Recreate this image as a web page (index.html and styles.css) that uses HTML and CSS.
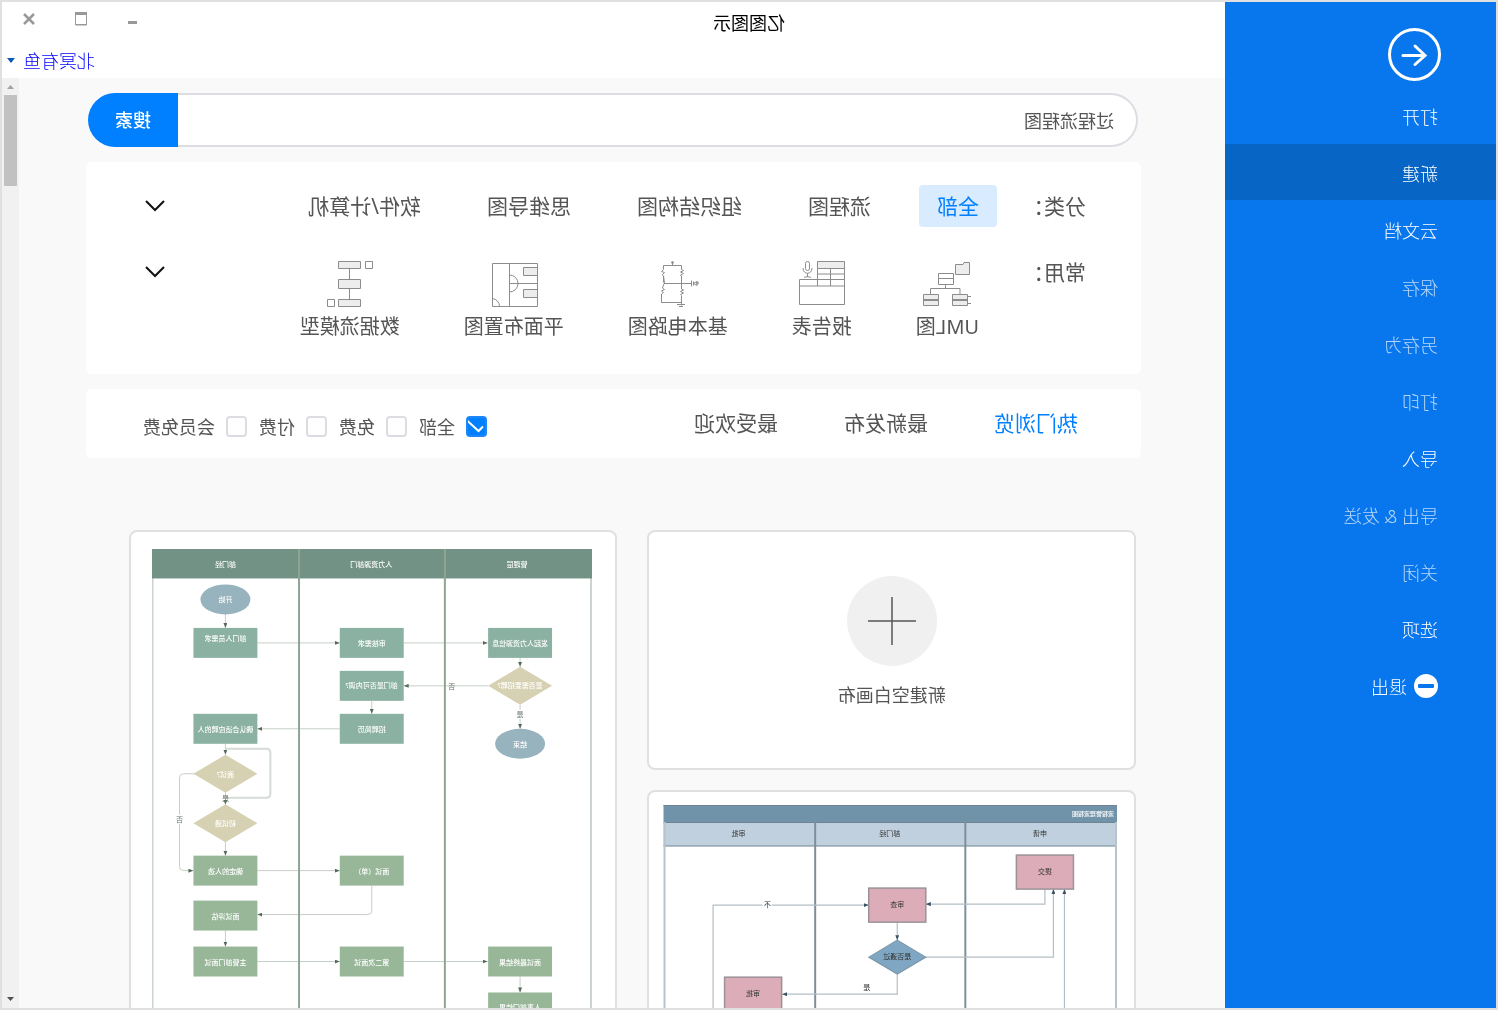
FILE: index.html
```html
<!DOCTYPE html>
<html lang="zh-CN">
<head>
<meta charset="utf-8">
<title>亿图图示</title>
<link rel="stylesheet" href="styles.css">
</head>
<body>
<div class="window">
  <nav class="sidebar">
    <button class="back" aria-label="返回">
      <svg viewBox="0 0 53 53"><circle cx="26.500" cy="26.500" r="25"/><path d="M38 27.500H16M26 18l-10 9.500l10 9"/></svg>
    </button>
    <a class="menu-item" href="#">打开</a>
    <a class="menu-item selected" href="#">新建</a>
    <a class="menu-item" href="#">云文档</a>
    <a class="menu-item disabled" href="#">保存</a>
    <a class="menu-item disabled" href="#">另存为</a>
    <a class="menu-item disabled" href="#">打印</a>
    <a class="menu-item" href="#">导入</a>
    <a class="menu-item disabled" href="#">导出 &amp; 发送</a>
    <a class="menu-item disabled" href="#">关闭</a>
    <a class="menu-item" href="#">选项</a>
    <a class="menu-item" href="#"><svg class="exit-icon" viewBox="0 0 24 24"><circle cx="12" cy="12" r="12" fill="#fff"/><rect x="4" y="10" width="16" height="4" rx="1" fill="#0876ed"/></svg>退出</a>
  </nav>

  <main class="main">
    <header class="header">
      <div class="title-row">
        <h1 class="title">亿图图示</h1>
        <div class="controls">
          <button aria-label="最小化"><svg viewBox="0 0 14 14"><path d="M3 10.500h9" stroke-width="3"/></svg></button>
          <button aria-label="最大化"><svg viewBox="0 0 14 14"><path d="M1.500 1v12h11V1M1 12.500h12" stroke-width="1"/><path d="M1 1.500h12" stroke-width="3"/></svg></button>
          <button aria-label="关闭窗口"><svg viewBox="0 0 14 14"><path d="M2 2l10 10M12 2L2 12" stroke-width="2.500"/></svg></button>
        </div>
      </div>
      <div class="user-row">
        <a class="user" href="#">北冥有鱼</a>
        <svg class="caret" viewBox="0 0 8 5"><path d="M0 0h8L4 5z" fill="#0a5ab4"/></svg>
      </div>
    </header>

    <div class="body">
      <div class="content">
        <form class="search">
          <input class="search-input" type="text" value="过程流程图" aria-label="搜索模板">
          <button class="search-button" type="button">搜索</button>
        </form>

        <section class="panel filters">
          <div class="filter-row">
            <span class="filter-label">分类：</span>
            <div class="categories">
              <button class="category active">全部</button>
              <button class="category">流程图</button>
              <button class="category">组织结构图</button>
              <button class="category">思维导图</button>
              <button class="category">软件/计算机</button>
            </div>
            <button class="expand" aria-label="展开分类"><svg viewBox="0 0 20 12"><path d="M1 1l9 9l9-9"/></svg></button>
          </div>
          <div class="filter-row">
            <span class="filter-label">常用：</span>
            <div class="common">
              <a class="common-item" href="#">
                <svg viewBox="0 0 48 48"><path class="f" d="M1.500 2.500h5.500l1 2h7.500v10h-14zM3.500 34.500h15v11h-15zM32.500 34.500h15v11h-15z"/><path d="M17.500 13.500h15v11h-15zM17.500 18.500h15M25.500 24.500v4M11 34v-5.500h29.500V34M0 36.500h3M0 43.500h3"/><path d="M3.500 40h15M32.500 40h15" stroke-width="2"/></svg>
                UML图</a>
              <a class="common-item" href="#">
                <svg viewBox="0 0 48 48"><path class="f" d="M1.500 1.500h27v7h-27z"/><path d="M1.500 8.500V44.500h45v-25h-45M28.500 8.500v17.500M1.500 14h27M1.500 26h45M15.500 8.500v17.500"/><rect x="36.500" y="1.500" width="4" height="9" rx="2"/><path d="M34 8c0 7 9 7 9 0M38.500 13.500v3.500M35 17.500c1-1 6-1 7 0"/></svg>
                报告表</a>
              <a class="common-item" href="#">
                <svg viewBox="0 0 48 48"><path d="M29.500 2v3.500M20.500 5.500h18v4l2 2-3 1 2 2-1 2v6M20.500 5.500v4l-2 1 3 1.500-3 1.500 3 1.500-1 1v13l-2 1 3 1.500-3 1.500 3 1.500-1 1v9M38.500 16l-1 7 1 2 1 3-2 1.500 3 1.500-2 1.500 2 1.500v8.500h-20v3M11 23.500h27M10.500 20.500v6M8.500 21.500v4M17 44.500h8M19 46.500h4"/><circle cx="29.500" cy="2.500" r="1"/><circle cx="4.500" cy="23" r="1"/><path d="M8.500 23.500L5 21.500v4z"/></svg>
                基本电路图</a>
              <a class="common-item" href="#">
                <svg viewBox="0 0 48 48"><path d="M.5 3.500h45v43H.5zM28.500 3.500v43M.5 23.500h28M28.500 15a8.500 8.500 0 0 0 0 17M45.500 38.500a8 8 0 0 0-7 8"/><path class="f" d="M.5 7.500h14v8H.5zM.5 29.500h14v8H.5z"/></svg>
                平面布置图</a>
              <a class="common-item" href="#">
                <svg viewBox="0 0 48 48"><path class="f" d="M13.500 1.500h22v7h-22zM13.500 19.500h22v9h-22zM13.500 39.500h22v7h-22z"/><path d="M1.500 1.500h7v7h-7zM39.500 39.500h7v7h-7zM24.500 8.500v11M24.500 28.500v11"/></svg>
                数据流模型</a>
            </div>
            <button class="expand" aria-label="展开常用"><svg viewBox="0 0 20 12"><path d="M1 1l9 9l9-9"/></svg></button>
          </div>
        </section>

        <section class="panel sort">
          <div class="tabs">
            <a class="tab active" href="#">热门浏览</a>
            <a class="tab" href="#">最新发布</a>
            <a class="tab" href="#">最受欢迎</a>
          </div>
          <div class="checks">
            <label><input type="checkbox" checked>全部</label>
            <label><input type="checkbox">免费</label>
            <label><input type="checkbox">付费</label>
            <label><input type="checkbox">会员免费</label>
          </div>
        </section>

        <section class="templates">
          <div class="column">
            <a class="card blank" href="#">
              <svg viewBox="0 0 90 90"><circle cx="45" cy="45" r="45" fill="#f0f0f0"/><path d="M21 45h48M45 21v48" stroke="#555" stroke-width="1.500"/></svg>
              新建空白画布
            </a>
            <a class="card blue-card" href="#">
              <svg class="diagram" viewBox="0 0 453 420">
                <defs><marker id="dark" markerUnits="userSpaceOnUse" markerWidth="5" markerHeight="4" refX="5" refY="2" orient="auto"><path d="M0 0l5 2l-5 2z" fill="#3c5262"/></marker></defs>
                <rect x="0" y="0" width="453" height="17" fill="#7093a9"/>
                <rect x="0" y="17" width="453" height="24" fill="#c1d0de"/>
                <g fill="none" stroke="#6e8594" stroke-width="1">
                  <path d="M0 .5h453M0 17.500h453M0 41h453"/>
                  <path d="M151.500 17v403M301.500 17v403" stroke="#7f8f9a" stroke-width="2"/>
                  <path d="M1 17v403M452 17v403" stroke="#b9c3cb" stroke-width="2"/>
                </g>
                <g fill="none" stroke="#b3bec5" stroke-width="1.200" marker-end="url(#dark)">
                  <path d="M72 84v15h119"/><path d="M219.500 117v18"/><path d="M191 152H63.500V84"/><path d="M52.500 420V84"/><path d="M219.500 169v20h115"/><path d="M403.500 420V100H248"/>
                </g>
                <g fill="#dcadb8" stroke="#9a9299" stroke-width="1.500"><rect x="43.500" y="50" width="57" height="34"/><rect x="191" y="83" width="57" height="34"/><rect x="335" y="172" width="57" height="34"/></g>
                <path d="M191 152l28.500-17l28.500 17l-28.500 17z" fill="#7fa6c2" stroke="#7894a6"/>
                <rect x="345" y="96" width="9" height="8" fill="#fff"/>
                <g class="tiny dark"><text x="77" y="31">申请</text><text x="227" y="31">部门经</text><text x="378" y="31">审批</text><text x="72" y="69">提交</text><text x="219.500" y="102">审查</text><text x="363.500" y="191">审批</text><text x="219.500" y="154">是否通过</text><text x="349" y="102">不</text><text x="250" y="185">是</text></g>
                <text class="tiny light small" x="24" y="11">流程管理流程图</text>
              </svg>
            </a>
          </div>
          <div class="column">
            <a class="card green-card" href="#">
              <svg class="diagram" viewBox="0 0 441 640">
                <defs><marker id="olive" markerUnits="userSpaceOnUse" markerWidth="5" markerHeight="4" refX="5" refY="2" orient="auto"><path d="M0 0l5 2l-5 2z" fill="#566a59"/></marker></defs>
                <g fill="none" stroke="#ccd5cd" stroke-width="2"><path d="M1 29v611M440 29v611"/></g>
                <g fill="none" stroke="#c6cfc7" stroke-width="1" marker-end="url(#olive)">
                  <path d="M335 94h-82.500"/><path d="M188.500 94h-84"/><path d="M367 65v14"/><path d="M72 109v9"/><path d="M72 156v24"/>
                  <path d="M104 137h84.500"/><path d="M220.500 152v13"/><path d="M252.500 180H335"/><path d="M367 195v11"/><path d="M367 244v12"/><path d="M367 293v14"/>
                  <path d="M398 225h11q4 0 4 4v89q0 4-4 4h-10"/><path d="M335 322h-82.500"/><path d="M220.500 337v25q0 4 4 4H335"/><path d="M367 382v16"/><path d="M335 413h-82.500"/><path d="M188.500 413h-84"/><path d="M72 428v16"/>
                </g>
                <path d="M367 200h-41q-4 0-4 4v41q0 4 4 4h41" fill="none" stroke="#d5dbd6" stroke-width="2"/>
                <rect x="0" y="0" width="441" height="29.500" fill="#729285"/>
                <path d="M147.300 0v640M293.300 0v640" stroke="#8ea594" stroke-width="2"/>
                <g fill="#97b3bd"><ellipse cx="367" cy="50.500" rx="25" ry="15"/><ellipse cx="72" cy="195" rx="25" ry="15"/></g>
                <g fill="#8ab1a2"><rect x="335" y="79" width="64" height="30"/><rect x="188.500" y="79" width="64" height="30"/><rect x="40" y="79" width="64" height="30"/><rect x="188.500" y="122" width="64" height="30"/><rect x="188.500" y="165" width="64" height="30"/><rect x="335" y="165" width="64" height="30"/></g>
                <g fill="#98b799"><rect x="335" y="307" width="64" height="30"/><rect x="188.500" y="307" width="64" height="30"/><rect x="335" y="352" width="64" height="30"/><rect x="335" y="398" width="64" height="30"/><rect x="188.500" y="398" width="64" height="30"/><rect x="40" y="398" width="64" height="30"/><rect x="40" y="444" width="64" height="30"/></g>
                <g fill="#d6d1b2"><path d="M40 137l32-19l32 19l-32 19zM335 225l32-19l32 19l-32 19zM335 274.500l32-19l32 19l-32 19z"/></g>
                <g fill="#fff"><rect x="68" y="161" width="8" height="9"/><rect x="409" y="266" width="8" height="9"/></g>
                <g class="tiny light"><text x="75" y="18">管理层</text><text x="221" y="18">人力资源部门</text><text x="367" y="18">部门经</text><text x="367" y="53">开始</text><text x="367" y="92">部门人员需求</text><text x="220.500" y="97">审核需求</text><text x="72" y="97">发起人力资源信息</text><text x="72" y="139">是否需要招聘?</text><text x="220.500" y="139">部门是否可内调?</text><text x="220.500" y="183">招聘简历</text><text x="367" y="183">确认合适应聘的人</text><text x="72" y="198">结束</text><text x="367" y="228">面试?</text><text x="367" y="277">初试通</text><text x="367" y="325">确定的人选</text><text x="220.500" y="325">面试（单）</text><text x="367" y="370">面试评估</text><text x="367" y="416">主管部门面试</text><text x="220.500" y="416">第二次面试</text><text x="72" y="416">面试最终结果</text><text x="72" y="462">人事部门结果</text></g>
                <g class="tiny grey"><text x="140.500" y="140">否</text><text x="72" y="168">是</text><text x="413" y="273">否</text><text x="367" y="252">是</text></g>
              </svg>
            </a>
          </div>
        </section>
      </div>
      <div class="scrollbar">
        <svg viewBox="0 0 17 17"><path d="M5 11h7l-3.500-4z" fill="#a3a3a3"/></svg>
        <div class="thumb"></div>
        <svg viewBox="0 0 17 17"><path d="M5 6h7l-3.500 4z" fill="#505050"/></svg>
      </div>
    </div>
  </main>
</div>
</body>
</html>
```
FILE: styles.css
```css
* { box-sizing: border-box; }

body {
  margin: 0;
  font-family: "Noto Sans", "Noto Sans CJK SC", sans-serif;
  font-size: 18px;
  color: #555;
}

a { color: inherit; text-decoration: none; }

button {
  font: inherit;
  color: inherit;
  background: none;
  border: 0;
  padding: 0;
}

svg { display: block; flex: none; }

/* The whole window is shown as in a mirror. */
.window {
  display: flex;
  height: 100vh;
  border: 2px solid #e0e0e0;
  overflow: hidden;
  transform: scaleX(-1);
}

/* Sidebar */
.sidebar {
  flex: none;
  width: 271px;
  padding-top: 26px;
  background: #0876ed;
  color: #fff;
  font-weight: 300;
}

.back {
  display: block;
  margin: 0 0 6px 55px;
}

.back svg {
  width: 53px;
  height: 53px;
  fill: none;
  stroke: #fff;
  stroke-width: 3px;
  stroke-linecap: round;
}

.menu-item {
  display: flex;
  align-items: center;
  gap: 7px;
  height: 56px;
  margin-bottom: 1px;
  padding: 2px 0 0 58px;
}

.menu-item.selected { background: #0665c5; }
.menu-item.disabled { color: rgba(255, 255, 255, 0.7); }
.exit-icon { width: 24px; height: 24px; }

/* Header */
.main {
  display: flex;
  flex-direction: column;
  flex: 1;
  min-width: 0;
}

.header {
  height: 76px;
  background: #fff;
}

.title-row {
  display: flex;
  height: 42px;
}

.title {
  flex: 1;
  margin: 0;
  font-size: 18px;
  font-weight: 400;
  line-height: 42px;
  color: #000;
  text-align: center;
}

.controls {
  display: flex;
  justify-content: flex-end;
  align-items: flex-start;
  gap: 38px;
  width: 271px;
  padding: 10px 20px 0 0;
}

.controls svg {
  width: 14px;
  height: 14px;
  fill: none;
  stroke: #999;
}

.user-row {
  display: flex;
  justify-content: flex-end;
  align-items: center;
  gap: 8px;
  height: 32px;
  padding-right: 5px;
}

.user { color: #00f; font-weight: 300; }
.caret { width: 8px; height: 5px; }

/* Scrolling body */
.body {
  display: flex;
  flex: 1;
  min-height: 0;
  background: #f9f9f9;
}

.content {
  flex: 1;
  min-width: 0;
  padding: 15px 67px 0 84px;
  overflow: hidden;
}

.scrollbar {
  display: flex;
  flex-direction: column;
  width: 17px;
  background: #f1f1f1;
}

.scrollbar svg { width: 17px; height: 17px; }

.thumb {
  height: 91px;
  margin: 0 2px auto;
  background: #c1c1c1;
}

/* Search */
.search {
  display: flex;
  height: 54px;
  margin: 0 2px 15px 3px;
}

.search-input {
  flex: 1;
  min-width: 0;
  padding: 0 22px;
  border: 2px solid #dcdde2;
  border-right: 0;
  border-radius: 27px 0 0 27px;
  background: #fff;
  font: inherit;
  color: #555;
}

.search-button {
  width: 90px;
  padding-bottom: 2px;
  border-radius: 0 27px 27px 0;
  background: #007fff;
  color: #fff;
  font-weight: 500;
}

/* Panels */
.panel {
  margin-bottom: 15px;
  border-radius: 6px;
  background: #fff;
}

.filters {
  display: flex;
  flex-direction: column;
  gap: 24px;
  padding: 23px 59px 33px 55px;
}

.filter-row {
  display: flex;
  font-size: 21px;
  line-height: 42px;
}

.filter-label { width: 89px; flex: none; }

.categories { display: flex; gap: 30px; flex: 1; }

.category {
  height: 42px;
  padding: 0 18px;
  border-radius: 4px;
  white-space: nowrap;
}

.category.active { background: #d9ebff; color: #007fff; }

.expand { height: 42px; }

.expand svg {
  width: 20px;
  height: 12px;
  fill: none;
  stroke: #111;
  stroke-width: 2px;
}

.common {
  display: flex;
  gap: 64px;
  flex: 1;
  padding: 9px 0 0 18px;
}

.common-item {
  display: flex;
  flex-direction: column;
  align-items: center;
  gap: 5px;
  font-size: 20px;
  line-height: 28px;
  white-space: nowrap;
}

.common-item svg {
  width: 48px;
  height: 48px;
  fill: none;
  stroke: #8c8c8c;
  stroke-width: 1px;
}

.common-item .f { fill: #ededed; }

.sort {
  display: flex;
  justify-content: space-between;
  height: 69px;
  padding: 0 57px 0 63px;
}

.tabs {
  display: flex;
  gap: 66px;
  font-size: 21px;
  line-height: 68px;
}

.tab.active { color: #007fff; }

.checks { display: flex; gap: 12px; padding-top: 5px; }

.checks label { display: flex; align-items: center; gap: 11px; }

.checks input {
  appearance: none;
  width: 21px;
  height: 21px;
  margin: 0;
  border: 2px solid #dcdde2;
  border-radius: 4px;
  background: #fff;
}

.checks input:checked {
  border-color: #1e86f5;
  background: #007fff url("data:image/svg+xml,%3Csvg xmlns='http://www.w3.org/2000/svg' viewBox='0 0 21 21'%3E%3Cpath d='M4 10.500l4.500 4.500L20 4.500' fill='none' stroke='white' stroke-width='2'/%3E%3C/svg%3E") center / 21px 21px border-box;
}

/* Template gallery */
.templates {
  display: grid;
  grid-template-columns: 1fr 1fr;
  gap: 30px;
  margin: 72px 43px 0 5px;
}

.column { display: flex; flex-direction: column; gap: 20px; }

.card {
  display: block;
  border: 2px solid #e0e0e0;
  border-radius: 8px;
  background: #fff;
}

.blank {
  display: flex;
  flex-direction: column;
  align-items: center;
  gap: 15px;
  height: 240px;
  padding-top: 44px;
}

.blank svg { width: 90px; height: 90px; }

.green-card { padding: 17px 21px 17px 23px; }
.blue-card { padding: 13px 14px 13px 17px; }
.diagram { width: 100%; height: auto; }

.tiny { font-size: 7px; text-anchor: middle; }
.small { font-size: 6px; }
.light { fill: #fff; font-weight: 500; }
.dark { fill: #333; }
.grey { fill: #66756a; }
```
